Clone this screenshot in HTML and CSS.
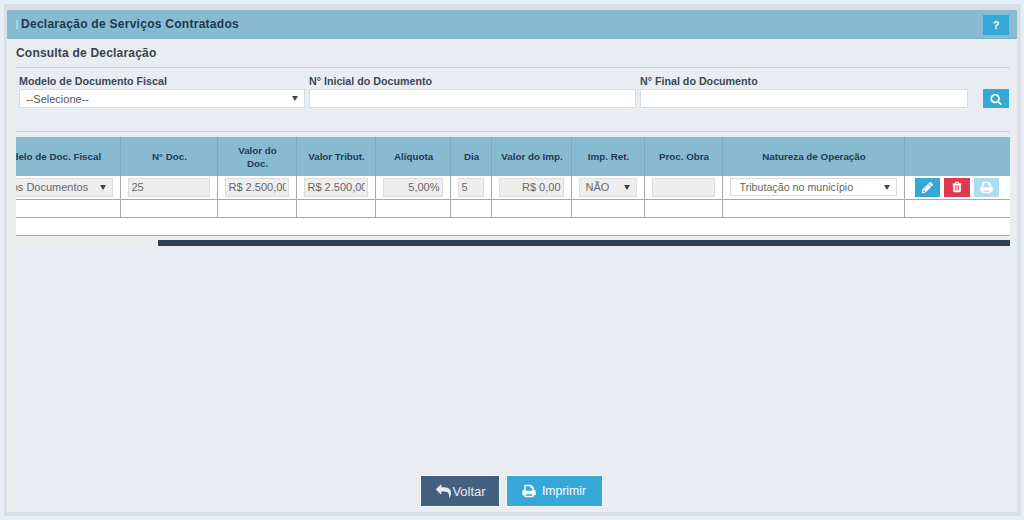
FILE: index.html
```html
<!DOCTYPE html>
<html lang="pt-BR">
<head>
<meta charset="utf-8">
<title>Declaração de Serviços Contratados</title>
<link rel="stylesheet" href="styles.css">
</head>
<body>
<svg class="defs" width="0" height="0" aria-hidden="true">
<symbol id="i-search" viewBox="0 0 1792 1792"><path d="M1216 832q0-185-131.5-316.5t-316.5-131.5-316.5 131.5-131.5 316.5 131.5 316.5 316.5 131.5 316.5-131.5 131.5-316.5zm512 832q0 52-38 90t-90 38q-54 0-90-38l-343-342q-179 124-399 124-143 0-273.5-55.5t-225-150-150-225-55.5-273.5 55.5-273.5 150-225 225-150 273.5-55.5 273.5 55.5 225 150 150 225 55.5 273.5q0 220-124 399l343 343q37 37 37 90z"/></symbol>
<symbol id="i-reply" viewBox="0 0 1792 1792"><path d="M1792 1120q0 166-127 451-3 7-10.5 24t-13.5 30-13 22q-12 17-28 17-15 0-23.5-10t-8.5-25q0-9 2.5-26.5t2.5-23.5q5-68 5-123 0-101-17.5-181t-48.5-138.5-80-101-105.5-69.5-133-42.5-154-21.5-175.5-6h-224v256q0 26-19 45t-45 19-45-19l-512-512q-19-19-19-45t19-45l512-512q19-19 45-19t45 19 19 45v256h224q713 0 875 403 53 134 53 333z"/></symbol>
<symbol id="i-print" viewBox="0 0 1792 1792"><path d="M448 1536h896v-256h-896v256zm0-640h896v-384h-160q-40 0-68-28t-28-68v-160h-640v640zm1152 64q0-26-19-45t-45-19-45 19-19 45 19 45 45 19 45-19 19-45zm128 0v416q0 13-9.5 22.5t-22.5 9.5h-224v160q0 40-28 68t-68 28h-960q-40 0-68-28t-28-68v-160h-224q-13 0-22.5-9.5t-9.5-22.5v-416q0-79 56.5-135.5t135.5-56.5h64v-544q0-40 28-68t68-28h672q40 0 88 20t76 48l152 152q28 28 48 76t20 88v256h64q79 0 135.5 56.5t56.5 135.5z"/></symbol>
<symbol id="i-trash" viewBox="0 0 1792 1792"><path d="M704 1376v-704q0-14-9-23t-23-9h-64q-14 0-23 9t-9 23v704q0 14 9 23t23 9h64q14 0 23-9t9-23zm256 0v-704q0-14-9-23t-23-9h-64q-14 0-23 9t-9 23v704q0 14 9 23t23 9h64q14 0 23-9t9-23zm256 0v-704q0-14-9-23t-23-9h-64q-14 0-23 9t-9 23v704q0 14 9 23t23 9h64q14 0 23-9t9-23zm-544-992h448l-48-117q-7-9-17-11h-317q-10 2-17 11zm928 32v64q0 14-9 23t-23 9h-96v948q0 83-47 143.5t-113 60.5h-832q-66 0-113-58.5t-47-141.5v-952h-96q-14 0-23-9t-9-23v-64q0-14 9-23t23-9h309l70-167q15-37 54-63t79-26h320q40 0 79 26t54 63l70 167h309q14 0 23 9t9 23z"/></symbol>
<symbol id="i-pencil" viewBox="0 0 1792 1792"><path d="M491 1536l91-91-235-235-91 91v107h128v128h107zm523-928q0-22-22-22-10 0-17 7l-542 542q-7 7-7 17 0 22 22 22 10 0 17-7l542-542q7-7 7-17zm-54-192l416 416-832 832h-416v-416zm683 96q0 53-37 90l-166 166-416-416 166-165q36-38 90-38 53 0 91 38l235 234q37 39 37 91z"/></symbol>
</svg>
<main class="panel">
  <header class="titlebar">
    <span class="mark"></span>
    <h1 class="title">Declaração de Serviços Contratados</h1>
    <button class="btn btn-info btn-help" type="button">?</button>
  </header>
  <section class="content">
    <h2 class="subtitle">Consulta de Declaração</h2>
    <form class="filters">
      <label class="field field-model"><span class="label">Modelo de Documento Fiscal</span>
        <select class="control select-arrow"><option>--Selecione--</option></select></label>
      <label class="field field-start"><span class="label">N° Inicial do Documento</span>
        <input class="control" type="text"></label>
      <label class="field field-end"><span class="label">N° Final do Documento</span>
        <input class="control" type="text"></label>
      <button class="btn btn-info btn-search" type="button"><svg class="icon"><use href="#i-search"/></svg></button>
    </form>
    <div class="table-scroll">
      <table class="grid">
        <colgroup>
          <col class="c1"><col class="c2"><col class="c3"><col class="c4"><col class="c5"><col class="c6"><col class="c7"><col class="c8"><col class="c9"><col class="c10"><col class="c11">
        </colgroup>
        <thead>
          <tr>
            <th>Modelo de Doc. Fiscal</th><th>N° Doc.</th><th>Valor do<br>Doc.</th><th>Valor Tribut.</th><th>Alíquota</th><th>Dia</th><th>Valor do Imp.</th><th>Imp. Ret.</th><th>Proc. Obra</th><th>Natureza de Operação</th><th></th>
          </tr>
        </thead>
        <tbody>
          <tr class="row-data">
            <td><select class="cell-input select-arrow" disabled><option>Todos Documentos</option></select></td>
            <td><input class="cell-input" value="25" readonly></td>
            <td><input class="cell-input" value="R$ 2.500,00" readonly></td>
            <td><input class="cell-input" value="R$ 2.500,00" readonly></td>
            <td><input class="cell-input right" value="5,00%" readonly></td>
            <td><input class="cell-input" value="5" readonly></td>
            <td><input class="cell-input right" value="R$ 0,00" readonly></td>
            <td><select class="cell-input select-arrow" disabled><option>NÃO</option></select></td>
            <td><input class="cell-input" readonly></td>
            <td><select class="cell-input select-arrow nature"><option>Tributação no município</option></select></td>
            <td class="actions">
              <button class="btn btn-info btn-row" type="button"><svg class="icon"><use href="#i-pencil"/></svg></button>
              <button class="btn btn-danger btn-row" type="button"><svg class="icon icon-small"><use href="#i-trash"/></svg></button>
              <button class="btn btn-info btn-row faded" type="button"><svg class="icon icon-solid"><use href="#i-print"/></svg></button>
            </td>
          </tr>
          <tr class="row-empty"><td></td><td></td><td></td><td></td><td></td><td></td><td></td><td></td><td></td><td></td><td></td></tr>
          <tr class="row-empty"><td class="wide" colspan="11"></td></tr>
        </tbody>
      </table>
      <div class="scrollbar"><div class="thumb"></div></div>
    </div>
  </section>
  <footer class="footer">
    <button class="btn btn-dark btn-large" type="button"><svg class="icon"><use href="#i-reply"/></svg>Voltar</button>
    <button class="btn btn-info btn-large btn-print" type="button"><svg class="icon icon-solid"><use href="#i-print"/></svg>Imprimir</button>
  </footer>
</main>
</body>
</html>
```
FILE: styles.css
```css
* { box-sizing: border-box; }
html, body { height: 100%; }
body {
  margin: 0;
  height: 520px;
  overflow: hidden;
  background: #e7edf8;
  padding: 4px 3px 0 4px;
  font-family: "Liberation Sans", Arial, sans-serif;
  font-size: 12px;
  color: #3a4554;
}
.defs { display: block; height: 0; }
.panel {
  height: 512px;
  display: flex;
  flex-direction: column;
  background: #e9edf2;
  border: solid #d9dde4;
  border-width: 6px 4px 4px 3px;
}
.titlebar {
  height: 29px;
  flex: none;
  display: flex;
  align-items: center;
  padding: 0 8px 0 9px;
  background: #88bbcf;
  border-bottom: 1px solid #7fb2c6;
}
.mark { width: 2px; height: 9px; background: #9fd8ea; margin-right: 3px; flex: none; }
.title {
  margin: 0;
  flex: 1;
  font-size: 12px;
  font-weight: bold;
  letter-spacing: 0.27px;
  color: #1d3850;
}
.btn {
  display: inline-flex;
  align-items: center;
  justify-content: center;
  border: 0;
  padding: 0;
  color: #fff;
  font-family: inherit;
}
.btn-info { background: #35a8d8; }
.btn-danger { background: #dc3a4e; }
.btn-dark { background: #44607f; }
.icon { fill: currentColor; display: block; }
.icon-solid { stroke: currentColor; stroke-width: 60px; }
.btn-help { width: 26px; height: 20px; margin-top: 1px; font-size: 11px; font-weight: bold; }
.content { flex: none; padding: 0 7px 0 9px; }
.subtitle {
  margin: 0;
  height: 29px;
  padding-top: 7px;
  font-size: 12px;
  font-weight: bold;
  letter-spacing: 0.2px;
  line-height: 14px;
  color: #39424e;
  border-bottom: 1px solid #ccd0d8;
}
.filters {
  display: flex;
  align-items: flex-end;
  height: 64px;
  padding: 0 1px 23px 3px;
  border-bottom: 1px solid #ccd0d8;
}
.field { display: flex; flex-direction: column; flex: none; margin-right: 4px; }
.field-model { width: 286px; }
.field-start { width: 327px; }
.field-end { width: 328px; margin-right: 15px; }
.label { font-weight: bold; font-size: 10.7px; line-height: 14px; padding-bottom: 1px; color: #3b4656; }
.control {
  height: 19px;
  width: 100%;
  margin: 0;
  padding: 0 6px;
  background: #fff;
  border: 1px solid #d3dbe4;
  border-radius: 0;
  font-family: inherit;
  font-size: 11px;
  color: #555;
}
.select-arrow {
  appearance: none;
  background-image: url("data:image/svg+xml,%3Csvg xmlns='http://www.w3.org/2000/svg' width='6' height='5'%3E%3Cpath d='M0 0h6L3 5z' fill='%23444'/%3E%3C/svg%3E");
  background-repeat: no-repeat;
  background-position: right 6px center;
  background-size: 6px 5px;
}
.btn-search { width: 26px; height: 19px; }
.btn-search .icon { width: 12px; height: 12px; }
.table-scroll { overflow: hidden; margin-top: 5px; height: 111px; }
.grid {
  table-layout: fixed;
  border-collapse: collapse;
  width: 1030px;
  margin-left: -36px;
  background: #fff;
}
.c1 { width: 140px; } .c2 { width: 97px; } .c3 { width: 79px; } .c4 { width: 79px; }
.c5 { width: 75px; } .c6 { width: 41px; } .c7 { width: 80px; } .c8 { width: 73px; }
.c9 { width: 78px; } .c10 { width: 182px; } .c11 { width: 106px; }
.grid th {
  height: 39px;
  padding: 0 3px 0 5px;
  background: #88bbcf;
  border-right: 1px solid #7ba9bd;
  font-size: 9.8px;
  line-height: 13px;
  font-weight: bold;
  text-align: center;
  color: #1f3b55;
}
.grid th:first-child { white-space: nowrap; padding: 0 4px; }
.grid th:last-child { border-right: 0; }
.grid td {
  padding: 0 7px;
  border-right: 1px solid #a9a9a9;
  border-bottom: 1px solid #a9a9a9;
}
.grid td:last-child, .grid td.wide { border-right: 0; }
.row-data td { height: 23px; }
.row-empty td { height: 18px; }
.cell-input {
  display: block;
  width: 100%;
  height: 19px;
  margin: 0;
  padding: 0 2px 0 3px;
  background-color: #eeeeee;
  border: 1px solid #dcdcdc;
  border-radius: 0;
  opacity: 1;
  font-family: inherit;
  font-size: 11px;
  color: #666;
}
select.cell-input { padding-left: 6px; }
.cell-input.right { text-align: right; }
.cell-input.nature { background-color: #fff; height: 18px; padding-left: 9px; font-size: 10.7px; }
.actions { white-space: nowrap; font-size: 0; padding-left: 10px !important; padding-right: 0 !important; }
.actions .btn + .btn { margin-left: 4px; }
.btn-row { width: 25.5px; height: 19px; vertical-align: middle; }
.btn-row .icon { width: 13px; height: 13px; }
.btn-row .icon-small { width: 12px; height: 12px; }
.faded { opacity: 0.4; }
.scrollbar { height: 11px; margin-top: 0; padding-left: 142px; background: linear-gradient(#e9edf2 0 4px, #eeeeee 4px 11px, #e9edf2 11px); display: flex; }
.thumb { flex: 1; height: 6px; margin-top: 4px; background: #2b4158; }
.footer {
  flex: none;
  margin-top: auto;
  padding-bottom: 6px;
  display: flex;
  justify-content: center;
  gap: 8px;
  padding-right: 2px;
}
.btn-large { height: 30px; font-size: 12px; box-shadow: 0 0 0 1px #f4f6f9; }
.btn-dark { width: 78px; padding-left: 3px; font-size: 13px; color: #e8edf3; }
.btn-dark .icon { width: 15px; height: 15px; margin-right: 1px; }
.btn-print { width: 95px; font-size: 12.2px; }
.btn-print .icon { width: 14px; height: 14px; margin-right: 6px; }
```
